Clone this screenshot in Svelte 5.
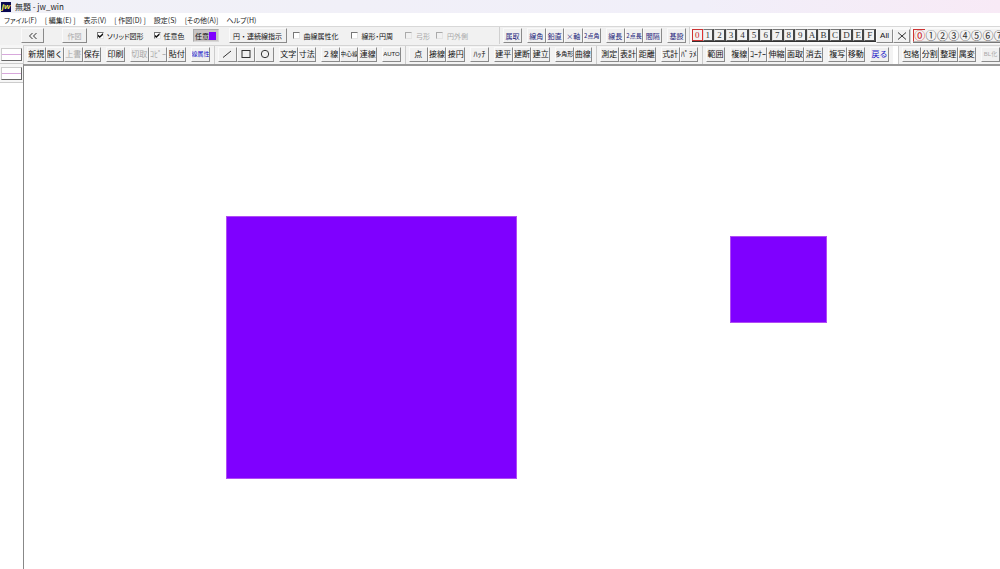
<script>
  const menus = ['ファイル(F)', '[ 編集(E) ]', '表示(V)', '[ 作図(D) ]', '設定(S)', '[その他(A)]', 'ヘルプ(H)'];

  const off = (text) => ({ text, disabled: true });
  const blue = (text) => ({ text, blue: true });

  const snapGroups = [['属取'], ['線角', '鉛直', '×軸', '2点角'], ['線長', '2点長', '間隔'], ['基設']];

  const narrow = ['線属性', '中心線', '多角形'];
  const bars = [
    [['新規', '開く', off('上書'), '保存'], ['印刷'], [off('切取'), off('ｺﾋﾟｰ'), '貼付'], [blue('線属性')]],
    [[{ icon: 'line', text: '線' }, { icon: 'rect', text: '矩形' }, { icon: 'circle', text: '円弧' }], ['文字', '寸法'], ['２線', '中心線', '連線'], ['AUTO']],
    [['点', '接線', '接円'], ['ﾊｯﾁ'], ['建平', '建断', '建立'], ['多角形', '曲線']],
    [['測定', '表計', '距離'], ['式計', 'ﾊﾟﾗﾒ']],
    [['範囲'], ['複線', 'ｺｰﾅｰ', '伸縮', '面取', '消去'], ['複写', '移動'], [blue('戻る')]],
    [['包絡', '分割', '整理', '属変'], [off('BL化')]]
  ].map((bar) => bar.map((group) => group.map((b) => (typeof b === 'string' ? { text: b } : b))));

  const layers = [...'0123456789ABCDEF'];
  const layerGroups = [...'⓪①②③④⑤⑥⑦'];

  let layer = $state(0);
  let layerGroup = $state(0);
  let solid = $state(true);
  let anyColor = $state(true);
</script>

<div class="window">
  <header class="title">
    <span class="logo">jw</span>
    <span>無題 - jw_win</span>
  </header>

  <nav class="menu">
    {#each menus as m}<button>{m}</button>{/each}
  </nav>

  <div class="controls">
    <div class="options">
      <button class="key back" aria-label="<<">
        <svg viewBox="0 0 10 8" width="10" height="8"><path d="M4.500 1 1.500 4l3 3M8.500 1l-3 3 3 3" /></svg>
      </button>
      <button class="key draw" disabled>作図</button>
      <label><input type="checkbox" bind:checked={solid} />ソリッド図形</label>
      <label><input type="checkbox" bind:checked={anyColor} />任意色</label>
      <button class="key color">任意<i></i></button>
      <button class="key arc">円・連続線指示</button>
      <label class="tight"><input type="checkbox" />曲線属性化</label>
      <label><input type="checkbox" />線形・円周</label>
      <label class="dim"><input type="checkbox" disabled />弓形</label>
      <label class="dim tight"><input type="checkbox" disabled />円外側</label>
    </div>
    <div class="snaps">
      {#each snapGroups as g}
        <div class="group n{g.length}">
          {#each g as t}<button class="key navy" class:small={t.length > 2}>{t}</button>{/each}
        </div>
      {/each}
    </div>
    <div class="layers">
      <div class="cells">
        {#each layers as l, i}
          <button class="cell" class:on={layer === i} onclick={() => (layer = i)}>{l}</button>
        {/each}
      </div>
      <button class="key side">All</button>
      <button class="key side" aria-label="×">
        <svg viewBox="0 0 10 8" width="10" height="8"><path d="M1 .5 9 7.5M9 .5 1 7.5" /></svg>
      </button>
    </div>
    <div class="layers">
      <div class="cells round">
        {#each layerGroups as l, i}
          <button class="cell" class:on={layerGroup === i} onclick={() => (layerGroup = i)}>{l}</button>
        {/each}
      </div>
    </div>
  </div>

  <div class="work">
    <aside>
      <div class="slot"><button class="key pen" aria-label="線色"><i></i></button></div>
      <div class="slot"><button class="key pen" aria-label="線種"><i></i></button></div>
    </aside>
    <div class="main">
      <div class="tools">
        {#each bars as bar}
          <div class="bar">
            {#each bar as g}
              <div class="group n{g.length}">
                {#each g as b}
                  <button
                    class="key"
                    class:blue={b.blue}
                    class:small={narrow.includes(b.text)}
                    class:latin={b.text === 'AUTO' || b.text === 'BL化'}
                    disabled={b.disabled}
                    aria-label={b.text}
                  >
                    {#if b.icon}
                      <svg viewBox="0 0 10 10" width="10" height="10">
                        {#if b.icon === 'line'}<path d="M1 8.5 9 2" />
                        {:else if b.icon === 'rect'}<rect x="1" y="1.5" width="8" height="7" />
                        {:else}<circle cx="5" cy="5" r="3.7" />{/if}
                      </svg>
                    {:else}{b.text}{/if}
                  </button>
                {/each}
              </div>
            {/each}
          </div>
        {/each}
      </div>
      <main>
        <svg class="drawing" role="img" aria-label="図面">
          <rect class="edge" x="202" y="150" width="291" height="263" />
          <rect x="203" y="151" width="289" height="261" />
          <rect class="edge" x="706" y="170" width="97" height="87" />
          <rect x="707" y="171" width="95" height="85" />
        </svg>
      </main>
    </div>
  </div>
</div>

<style>
  :global(body) {
    margin: 0;
    overflow: hidden;
  }
  .window {
    display: flex;
    flex-direction: column;
    height: 100vh;
    overflow: hidden;
    background: #fff;
    color: #111;
    font-family: "Noto Sans CJK JP", sans-serif;
    font-size: 8px;
    line-height: 10px;
  }
  button {
    margin: 0;
    padding: 0;
    border: 0;
    background: none;
    color: inherit;
    font: inherit;
    white-space: nowrap;
  }
  .title {
    display: flex;
    align-items: center;
    gap: 4px;
    height: 13px;
    flex: none;
    padding-left: 1px;
    background: linear-gradient(90deg, #f1f1f7, #f1eff9 70%, #f8eaf6);
    color: #222;
  }
  .logo {
    width: 10px;
    height: 10px;
    background: #080850;
    color: #f4ee4a;
    font: italic bold 8px/9px "Liberation Sans", sans-serif;
    text-align: center;
  }
  .menu {
    display: flex;
    align-items: center;
    gap: 8px;
    height: 13px;
    flex: none;
    padding-left: 4px;
    color: #222;
    font-size: 7px;
    font-feature-settings: "palt";
  }
  .controls {
    display: flex;
    height: 19px;
    flex: none;
    box-sizing: border-box;
    border-top: 1px solid #d8d8d8;
    padding-bottom: 1px;
    background: #f1f1f1;
    font-size: 7px;
    overflow: hidden;
  }
  .options {
    display: flex;
    align-items: center;
    gap: 10px;
    width: 499px;
    flex: none;
    box-sizing: border-box;
    padding-left: 21px;
  }
  .key {
    display: flex;
    align-items: center;
    justify-content: center;
    height: 15px;
    box-sizing: border-box;
    border: 1px solid;
    border-color: #fafafa #8a8a8a #8a8a8a #fafafa;
    background: #f0f0f0;
    overflow: hidden;
  }
  .key:disabled,
  .dim {
    color: #a8a8a8;
  }
  .back {
    width: 23px;
    margin-right: 8px;
  }
  .draw {
    width: 25px;
  }
  .color {
    width: 26px;
    height: 13px;
    margin-left: -2px;
    border-color: #aaa #d8d8d8 #d8d8d8 #aaa;
    background: #c8c4c4;
  }
  .color i {
    width: 7px;
    height: 8px;
    background: #7f00ff;
  }
  .arc {
    width: 58px;
  }
  label {
    display: flex;
    align-items: center;
    gap: 3px;
    white-space: nowrap;
    font-feature-settings: "palt";
  }
  .arc ~ label {
    gap: 4px;
  }
  .tight {
    margin-left: -4px;
  }
  label:not(.tight) {
    margin-right: 0;
  }
  .arc ~ label:not(.tight) {
    margin-left: 2px;
  }
  input {
    display: flex;
    appearance: none;
    width: 7px;
    height: 7px;
    margin: 0;
    border: 1px solid;
    border-color: #777 #e4e4e4 #e4e4e4 #777;
    box-sizing: border-box;
    background: #fff;
  }
  input:disabled {
    background: #f1f1f1;
    border-color: #aaa #e4e4e4 #e4e4e4 #aaa;
  }
  input:checked::after {
    content: "";
    width: 5px;
    height: 5px;
    background: #111;
    clip-path: polygon(0 30%, 35% 60%, 100% 0, 100% 40%, 35% 100%, 0 70%);
  }
  .snaps,
  .layers {
    display: flex;
    align-items: center;
    flex: none;
    border-left: 1px solid #d0d0d0;
  }
  .snaps {
    gap: 5px;
    width: 190px;
    box-sizing: border-box;
    padding-left: 3px;
  }
  .group {
    display: flex;
    flex: none;
  }
  .group .key {
    flex: 1 1 0;
    min-width: 0;
  }
  .n1 { width: 19px; }
  .n2 { width: 37px; }
  .n3 { width: 56px; }
  .n4 { width: 74px; }
  .n5 { width: 93px; }
  .navy {
    color: #22227a;
  }
  .layers {
    padding-left: 2px;
    background: #fafafa;
  }
  .cells {
    display: flex;
    width: 184px;
    border-bottom: 1px solid #333;
  }
  .cell {
    flex: 1 1 0;
    height: 12px;
    min-width: 0;
    box-sizing: border-box;
    border: 1px solid;
    border-color: #777 #444 #555 #ddd;
    border-right-width: 2px;
    background: #f2f2f2;
    color: #333;
    font: 9px/9px "Liberation Serif", serif;
    text-align: center;
  }
  .cell.on {
    border-color: #c33 #e03030 #c33 #c33;
    border-right-width: 1px;
    color: #c22;
  }
  .round {
    width: 92px;
    border-color: #777;
  }
  .round .cell {
    height: 13px;
    border: 0;
    border-bottom: 1px solid #bbb;
    font: 11px/12px "Noto Sans CJK JP", sans-serif;
    display: flex;
    align-items: center;
    justify-content: center;
  }
  .round .cell.on {
    border-top: 1px solid #c33;
    border-left: 1px solid #c33;
  }
  .side {
    width: 17px;
    height: 14px;
    font: 8px/10px "Liberation Sans", sans-serif;
  }
  svg {
    fill: none;
    stroke: #333;
    stroke-width: 1;
    flex: none;
  }
  .work {
    display: flex;
    flex: 1;
    min-height: 0;
  }
  aside {
    width: 23px;
    flex: none;
  }
  .slot {
    height: 19px;
    box-sizing: border-box;
    border-bottom: 1px solid #ccc;
    padding: 3px 1px 0;
    background: #f6f6f6;
  }
  .pen {
    width: 21px;
    height: 13px;
    background: #fff;
    border-color: #ccc #666 #666 #ccc;
  }
  .pen i {
    width: 100%;
    height: 1px;
    background: #d8a8dc;
  }
  .main {
    flex: 1;
    min-width: 0;
    display: flex;
    flex-direction: column;
  }
  .tools {
    display: flex;
    height: 19px;
    flex: none;
    box-sizing: border-box;
    border-top: 1px solid #d4d4d4;
    background: #fff;
    overflow: hidden;
  }
  .bar {
    display: flex;
    align-items: center;
    gap: 5px;
    flex: none;
    border-left: 1px solid #ccc;
    padding: 0 4px 2px 3px;
    background: #f3f3f3;
  }
  .bar:last-child {
    flex: 1 0 auto;
    margin-left: 5px;
  }
  .small,
  .latin {
    font-size: 6px;
  }
  .latin {
    font-family: "Liberation Sans", "Noto Sans CJK JP", sans-serif;
  }
  .blue {
    color: #1414c8;
  }
  main {
    flex: 1;
    min-height: 0;
    border-top: 2px solid #999;
    border-left: 1px solid #888;
    background: #fff;
  }
  .drawing {
    display: block;
    width: 100%;
    height: 100%;
    stroke: none;
    fill: #7f00ff;
  }
  .edge {
    fill: #b04cf4;
  }
</style>
